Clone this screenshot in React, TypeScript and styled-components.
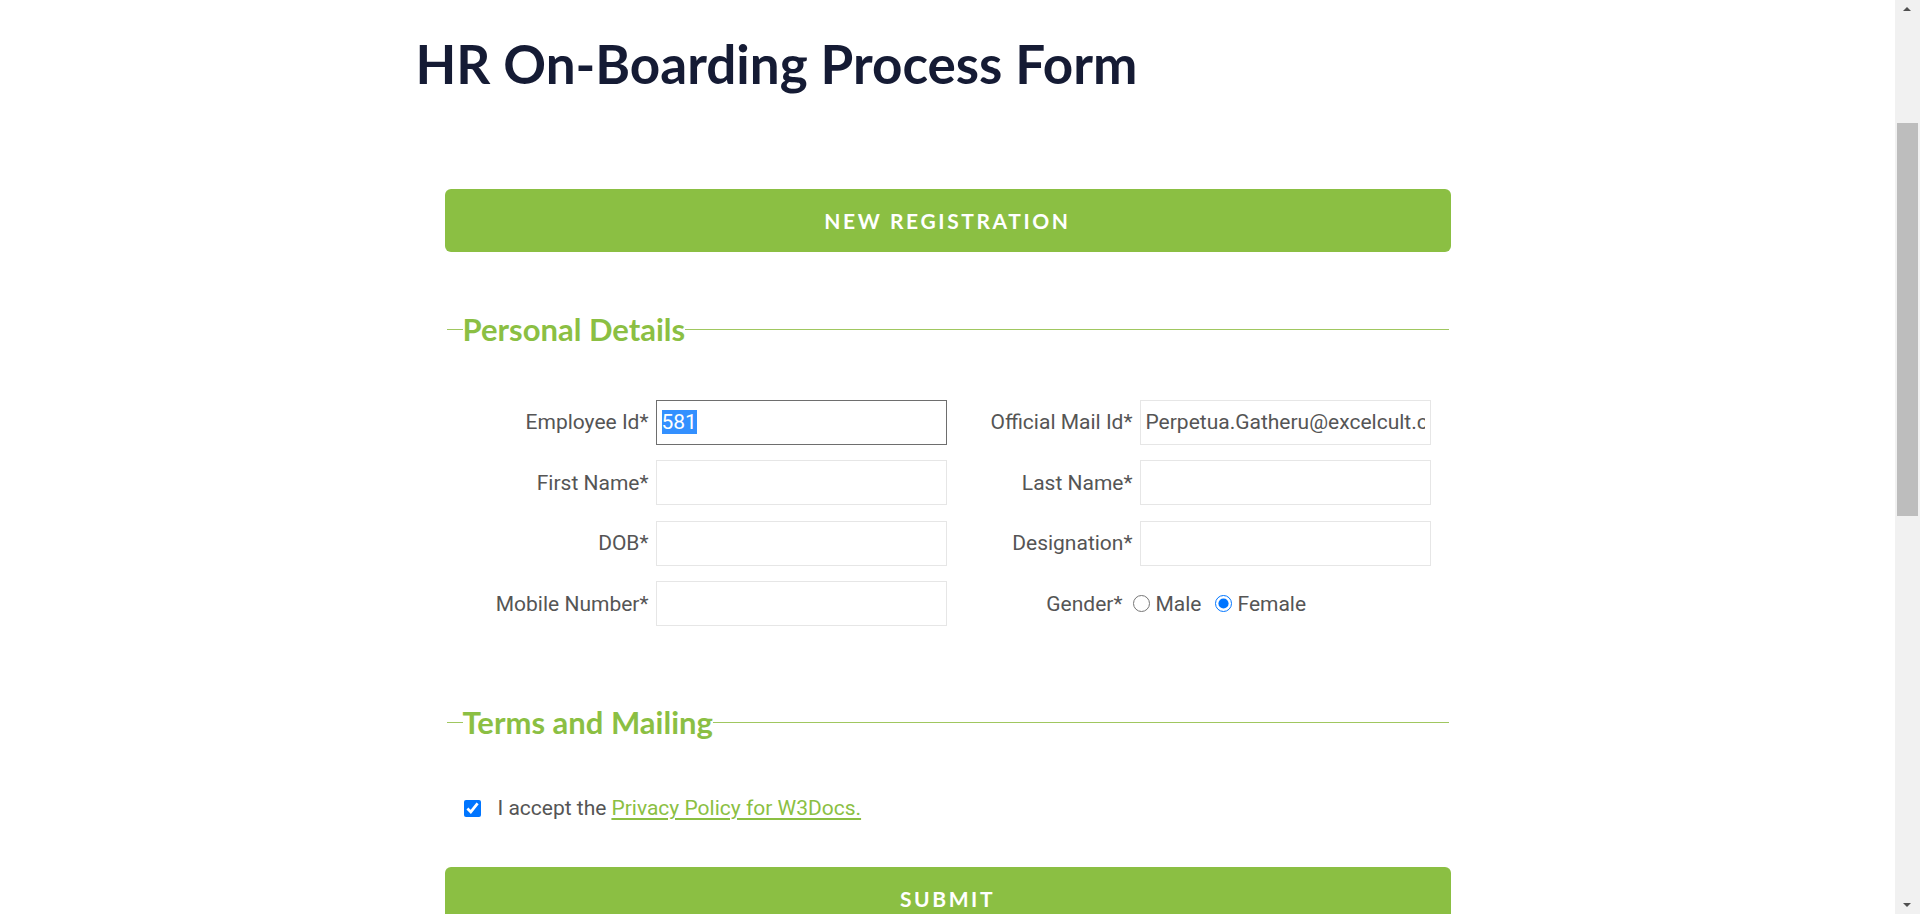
import React, { useLayoutEffect, useRef } from 'react';
import styled, { createGlobalStyle } from 'styled-components';

// --- data ---
interface Field {
  id: string;
  label: string;
  value?: string;
}

const LEFT_FIELDS: Field[] = [
  { id: 'empId', label: 'Employee Id*', value: '581' },
  { id: 'firstName', label: 'First Name*' },
  { id: 'dob', label: 'DOB*' },
  { id: 'mobile', label: 'Mobile Number*' },
];

const RIGHT_FIELDS: Field[] = [
  { id: 'mail', label: 'Official Mail Id*', value: 'Perpetua.Gatheru@excelcult.com' },
  { id: 'lastName', label: 'Last Name*' },
  { id: 'designation', label: 'Designation*' },
];

const GREEN = '#8bbf43';

// --- styles ---
const GlobalStyle = createGlobalStyle`
  html, body {
    margin: 0;
    padding: 0;
    background: #ffffff;
  }
  body {
    font-family: Roboto, 'Liberation Sans', sans-serif;
  }
`;

const Page = styled.div`
  width: calc(100% - 25px);
  padding-bottom: 80px;
`;

// browser scrollbar, drawn over the right edge
const ScrollTrack = styled.div`
  position: fixed;
  top: 0;
  right: 0;
  width: 25px;
  height: 100vh;
  background: #f1f1f1;
  z-index: 20;
`;

const ScrollArrow = styled.div<{ $down?: boolean }>`
  position: absolute;
  left: 8px;
  ${({ $down }) => ($down ? 'bottom: 7px;' : 'top: 7px;')}
  width: 0;
  height: 0;
  border-left: 4.5px solid transparent;
  border-right: 4.5px solid transparent;
  ${({ $down }) =>
    $down ? 'border-top: 4px solid #505050;' : 'border-bottom: 4px solid #505050;'}
`;

const ScrollThumb = styled.div`
  position: absolute;
  top: 123px;
  left: 2px;
  width: 21px;
  height: 393px;
  background: #bdbdbd;
`;

const Header = styled.div`
  width: 1064px;
  margin: 0 auto;
`;

const Title = styled.h1`
  margin: 32px 0 0 0;
  font-family: Lato, 'Liberation Sans', sans-serif;
  font-size: 53px;
  font-weight: 700;
  line-height: 1.2;
  color: #151b34;
`;

const Form = styled.form`
  width: 1006px;
  margin: 93px auto 0;
`;

const WideButton = styled.button`
  display: block;
  width: 100%;
  height: 63px;
  border: none;
  border-radius: 6px;
  background: ${GREEN};
  color: #ffffff;
  font-family: Lato, 'Liberation Sans', sans-serif;
  font-size: 21px;
  font-weight: 700;
  letter-spacing: 2.6px;
  text-transform: uppercase;
  cursor: pointer;
`;

const Section = styled.fieldset<{ $gapTop: number; $padBottom: number }>`
  margin: ${({ $gapTop }) => $gapTop}px 2px 0;
  padding: 0 16px ${({ $padBottom }) => $padBottom}px;
  border: none;
  border-top: 1px solid #a0c760;
  min-width: 0;
`;

const Legend = styled.legend`
  padding: 0;
  font-family: Lato, 'Liberation Sans', sans-serif;
  font-size: 31px;
  font-weight: 700;
  line-height: 1.2;
  color: ${GREEN};
`;

const FieldGrid = styled.div`
  display: grid;
  grid-template-columns: 193px 291px 193px 291px;
  grid-auto-rows: 45px;
  row-gap: 15.5px;
  margin-top: 52px;
`;

const Label = styled.label<{ $padRight?: number }>`
  display: flex;
  align-items: center;
  justify-content: flex-end;
  padding-right: ${({ $padRight }) => $padRight ?? 7}px;
  font-size: 21px;
  color: #555555;
  white-space: nowrap;
`;

const TextInput = styled.input`
  box-sizing: border-box;
  width: 100%;
  height: 45px;
  margin: 0;
  padding: 0 5px;
  border: 1px solid #e6e6e6;
  background: #ffffff;
  font-family: Roboto, 'Liberation Sans', sans-serif;
  font-size: 21px;
  color: #555555;
  outline: none;

  &:focus {
    border-color: #6e6e6e;
  }

  &::selection {
    background: #3390ff;
    color: #ffffff;
  }
`;

const RadioGroup = styled.div`
  display: flex;
  align-items: center;
  margin-left: -7px;
  font-size: 21px;
  color: #555555;
`;

const Radio = styled.input`
  width: 17px;
  height: 17px;
  margin: 0 6px 0 0;
`;

const RadioText = styled.span<{ $gapRight?: number }>`
  margin-right: ${({ $gapRight }) => $gapRight ?? 0}px;
`;

const TermsRow = styled.div`
  display: flex;
  align-items: center;
  margin-top: 55px;
  font-size: 21px;
  color: #555555;
`;

const Checkbox = styled.input`
  width: 17px;
  height: 17px;
  margin: 0 17px 0 1px;
`;

const PolicyLink = styled.a`
  margin-left: 5px;
  color: ${GREEN};
  text-decoration: underline;
  text-underline-offset: 3px;
`;

const SubmitWrap = styled.div`
  margin-top: 47px;
`;

// --- component ---
const App: React.FC = () => {
  const idRef = useRef<HTMLInputElement>(null);

  useLayoutEffect(() => {
    const el = idRef.current;
    if (el) {
      el.focus({ preventScroll: true });
      el.select();
    }
  }, []);

  return (
    <>
      <GlobalStyle />
      <Page>
        <Header>
          <Title>HR On-Boarding Process Form</Title>
        </Header>

        <Form onSubmit={(e) => e.preventDefault()}>
          <WideButton type="button">New Registration</WideButton>

          <Section $gapTop={59} $padBottom={40}>
            <Legend>Personal Details</Legend>
            <FieldGrid>
              {LEFT_FIELDS.map((left, i) => {
                const right = RIGHT_FIELDS[i];
                return (
                  <React.Fragment key={left.id}>
                    <Label htmlFor={left.id}>{left.label}</Label>
                    <TextInput
                      id={left.id}
                      ref={i === 0 ? idRef : undefined}
                      defaultValue={left.value ?? ''}
                    />
                    {right ? (
                      <>
                        <Label htmlFor={right.id}>{right.label}</Label>
                        <TextInput id={right.id} defaultValue={right.value ?? ''} />
                      </>
                    ) : (
                      <>
                        <Label $padRight={17}>Gender*</Label>
                        <RadioGroup>
                          <Radio type="radio" name="gender" id="male" />
                          <RadioText $gapRight={13}>Male</RadioText>
                          <Radio type="radio" name="gender" id="female" defaultChecked />
                          <RadioText>Female</RadioText>
                        </RadioGroup>
                      </>
                    )}
                  </React.Fragment>
                );
              })}
            </FieldGrid>
          </Section>

          <Section $gapTop={38} $padBottom={0}>
            <Legend>Terms and Mailing</Legend>
            <TermsRow>
              <Checkbox type="checkbox" defaultChecked />
              I accept the
              <PolicyLink href="#">Privacy Policy for W3Docs.</PolicyLink>
            </TermsRow>
          </Section>

          <SubmitWrap>
            <WideButton type="submit">Submit</WideButton>
          </SubmitWrap>
        </Form>
      </Page>

      <ScrollTrack>
        <ScrollArrow />
        <ScrollThumb />
        <ScrollArrow $down />
      </ScrollTrack>
    </>
  );
};

export default App;
